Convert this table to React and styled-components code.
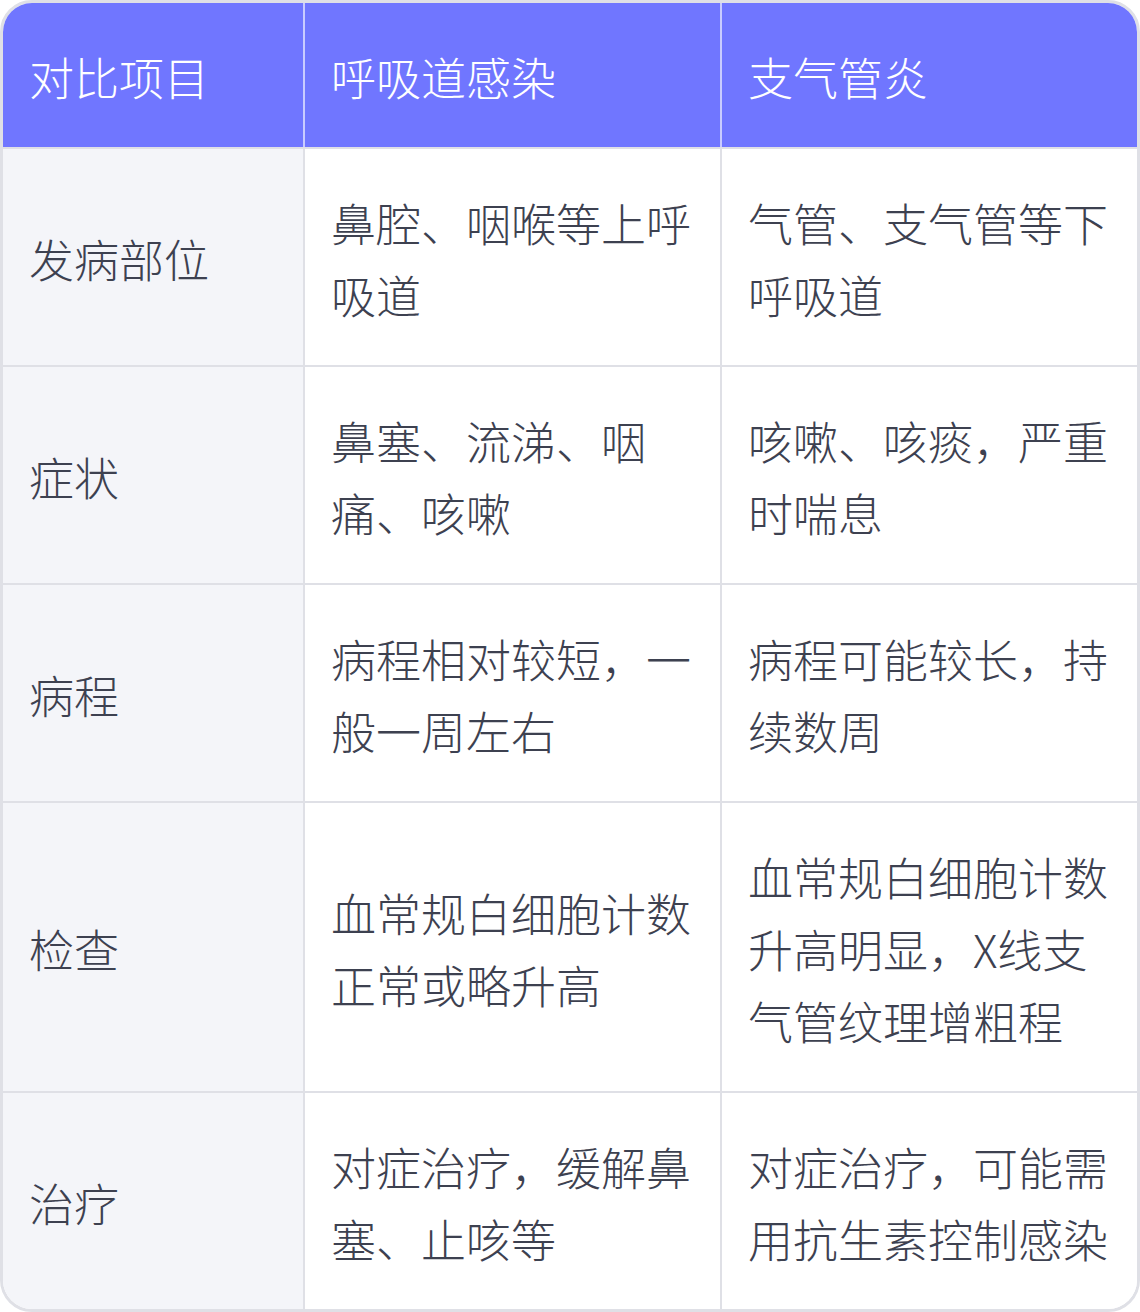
import React from "react";
import styled, { createGlobalStyle } from "styled-components";

const GlobalStyle = createGlobalStyle`
  html, body {
    margin: 0;
    padding: 0;
    background: #ffffff;
  }
  body {
    font-family: "Noto Sans CJK SC", "Noto Sans", sans-serif;
  }
`;

export const TableContainer = styled.div`
  width: 1140px;
  box-sizing: border-box;
  border: 3px solid #dfe0e6;
  border-radius: 32px;
  overflow: hidden;
  background: #ffffff;
`;

export const Table = styled.table`
  width: 100%;
  border-collapse: collapse;
  table-layout: fixed;
`;

export const TableHeaderLabel = styled.th`
  background: #7076ff;
  color: #ffffff;
  font-size: 45px;
  font-weight: 300;
  line-height: 72px;
  text-align: left;
  padding: 38px 26px 34px;
  border-left: 2px solid #c9cbff;
  border-bottom: 2px solid #dfe0e6;
  &:first-child {
    border-left: none;
  }
`;

export const TableRow = styled.tr`
  &:not(:last-child) td {
    border-bottom: 2px solid #dfe0e6;
  }
`;

export const TableData = styled.td`
  background: ${(props) => (props.$label ? "#f4f5f9" : "#ffffff")};
  color: #3d4150;
  font-size: 45px;
  font-weight: 300;
  line-height: 72px;
  padding: 38px 26px 34px;
  vertical-align: middle;
  border-left: 2px solid #dfe0e6;
  &:first-child {
    border-left: none;
  }
`;

const headers = ["对比项目", "呼吸道感染", "支气管炎"];

const rows = [
  ["发病部位", "鼻腔、咽喉等上呼吸道", "气管、支气管等下呼吸道"],
  ["症状", "鼻塞、流涕、咽痛、咳嗽", "咳嗽、咳痰，严重时喘息"],
  ["病程", "病程相对较短，一般一周左右", "病程可能较长，持续数周"],
  ["检查", "血常规白细胞计数正常或略升高", "血常规白细胞计数升高明显，X线支气管纹理增粗程"],
  ["治疗", "对症治疗，缓解鼻塞、止咳等", "对症治疗，可能需用抗生素控制感染"],
];

export default function App() {
  return (
    <>
      <GlobalStyle />
      <TableContainer>
        <Table>
          <colgroup>
            <col style={{ width: "301px" }} />
            <col style={{ width: "417px" }} />
            <col />
          </colgroup>
          <thead>
            <tr>
              {headers.map((h) => (
                <TableHeaderLabel key={h}>{h}</TableHeaderLabel>
              ))}
            </tr>
          </thead>
          <tbody>
            {rows.map(([label, a, b]) => (
              <TableRow key={label}>
                <TableData $label>{label}</TableData>
                <TableData>{a}</TableData>
                <TableData>{b}</TableData>
              </TableRow>
            ))}
          </tbody>
        </Table>
      </TableContainer>
    </>
  );
}
